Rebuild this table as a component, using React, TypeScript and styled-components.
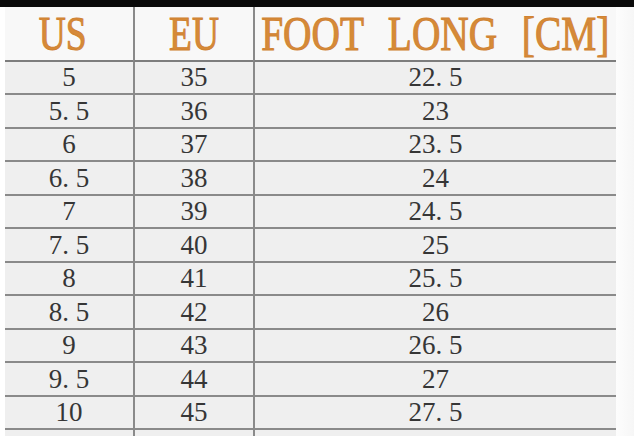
import styled, { createGlobalStyle } from "styled-components";

const GlobalStyle = createGlobalStyle`
  html, body {
    margin: 0;
    padding: 0;
    background: #ffffff;
  }
  body {
    font-family: "Liberation Serif", "Times New Roman", serif;
  }
`;

const sizes = [
  ["5", "35", "22. 5"],
  ["5. 5", "36", "23"],
  ["6", "37", "23. 5"],
  ["6. 5", "38", "24"],
  ["7", "39", "24. 5"],
  ["7. 5", "40", "25"],
  ["8", "41", "25. 5"],
  ["8. 5", "42", "26"],
  ["9", "43", "26. 5"],
  ["9. 5", "44", "27"],
  ["10", "45", "27. 5"],
  ["", "", ""],
];

function App() {
  return (
    <Page>
      <GlobalStyle />
      <TopBar />
      <Body>
        <Table>
          <HeadCell $shift={12}>
            <HeadText>US</HeadText>
          </HeadCell>
          <HeadCell $divider>
            <HeadText>EU</HeadText>
          </HeadCell>
          <HeadCell $divider>
            <HeadText $wide>FOOT LONG [CM]</HeadText>
          </HeadCell>
          {sizes.map((row, r) =>
            row.map((value, i) => (
              <Cell key={r + "-" + i} $divider={i > 0}>
                {value}
              </Cell>
            ))
          )}
        </Table>
        <Margin />
      </Body>
    </Page>
  );
}

const Page = styled.div`
  width: 634px;
  height: 436px;
  overflow: hidden;
  background: #ffffff;
`;

const TopBar = styled.div`
  height: 7px;
  background: #0a0a0a;
`;

const Body = styled.div`
  display: flex;
  padding-left: 5px;
`;

const Table = styled.div`
  width: 611px;
  display: grid;
  grid-template-columns: 128px 120px 1fr;
  grid-auto-rows: 33.5px;
  grid-template-rows: 54.5px;
  background: #efefef;
`;

const Margin = styled.div`
  flex: 1;
  background: linear-gradient(90deg, #fdfdfd, #f6f6f6);
`;

const HeadCell = styled.div<{ $divider?: boolean; $shift?: number }>`
  box-sizing: border-box;
  display: flex;
  justify-content: center;
  align-items: flex-start;
  padding-right: ${(p) => p.$shift ?? 0}px;
  background: #f8f8f8;
  border-bottom: 2px solid #7d7d7d;
  border-left: ${(p) => (p.$divider ? "2px solid #8a8a8a" : "none")};
  overflow: hidden;
`;

const HeadText = styled.span<{ $wide?: boolean }>`
  display: inline-block;
  font-size: 48px;
  line-height: 48px;
  margin-top: 3px;
  color: #d68a38;
  -webkit-text-stroke: 1px #d08232;
  white-space: pre;
  word-spacing: ${(p) => (p.$wide ? "18px" : "0")};
  transform: scaleX(${(p) => (p.$wide ? 0.82 : 0.78)});
  transform-origin: center;
`;

const Cell = styled.div<{ $divider?: boolean }>`
  box-sizing: border-box;
  display: flex;
  justify-content: center;
  align-items: center;
  padding-top: 1px;
  font-size: 27px;
  color: #363636;
  border-bottom: 2px solid #8a8a8a;
  border-left: ${(p) => (p.$divider ? "2px solid #8a8a8a" : "none")};
  white-space: pre;
`;

export default App;
